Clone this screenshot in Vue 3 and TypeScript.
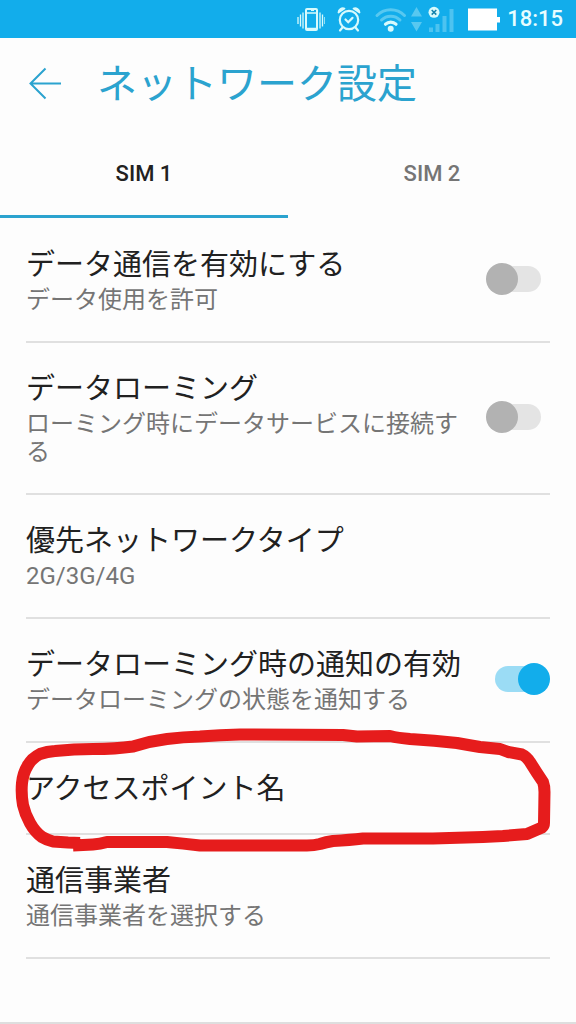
<script setup lang="ts">
import { ref } from 'vue'

interface Setting {
  id: string
  title: string
  summary?: string
  toggle?: boolean
  on?: boolean
  marked?: boolean
}

const sims = ['SIM 1', 'SIM 2']
const activeSim = ref(0)

const settings = ref<Setting[]>([
  { id: 'data', title: 'データ通信を有効にする', summary: 'データ使用を許可', toggle: true, on: false },
  { id: 'roaming', title: 'データローミング', summary: 'ローミング時にデータサービスに接続する', toggle: true, on: false },
  { id: 'network-type', title: '優先ネットワークタイプ', summary: '2G/3G/4G' },
  { id: 'notify', title: 'データローミング時の通知の有効', summary: 'データローミングの状態を通知する', toggle: true, on: true },
  { id: 'apn', title: 'アクセスポイント名', marked: true },
  { id: 'carrier', title: '通信事業者', summary: '通信事業者を選択する' },
])
</script>

<template>
  <div class="screen">
    <div class="status">
      <svg class="vibrate" viewBox="298 0 28 38" fill="none" stroke="currentColor" aria-hidden="true">
        <rect x="307" y="9" width="11" height="21" rx="1" stroke-width="2" />
        <path d="M308 13h9M308 28.500h9" stroke-width="1.500" />
        <path d="M312 10.500h3" stroke-width="1" />
        <path d="M299 17v7M301.500 14.500v12M304 12.500v16M321 12.500v16M323.500 14.500v12M326 17v7" stroke-width="1.300" />
      </svg>
      <svg class="alarm" viewBox="338 0 24 38" fill="none" stroke="currentColor" stroke-width="2.200" stroke-linecap="round" aria-hidden="true">
        <circle cx="350" cy="20" r="9.200" />
        <path d="M346.500 19.500l2.700 2.700 4.300-4.300" />
        <path d="M343.500 27.500l-2.500 3M356.500 27.500l2.500 3" />
        <path d="M339.500 12.500a4.500 4.500 0 0 1 6-4zM360.500 12.500a4.500 4.500 0 0 0-6-4z" fill="currentColor" stroke-width="1.800" stroke-linejoin="round" />
      </svg>
      <div class="network">
        <svg class="wifi" viewBox="375 0 34 38" fill="none" stroke="currentColor" stroke-linecap="round" aria-hidden="true">
          <g opacity="0.350" stroke-width="3">
            <path d="M379 15.500a19.500 19.500 0 0 1 27.500 0" />
            <path d="M383.500 20a13 13 0 0 1 18.500 0" />
          </g>
          <path d="M387.500 24.200a7.500 7.500 0 0 1 10.500 0" stroke-width="3.200" />
          <circle cx="392.700" cy="28.800" r="3" fill="currentColor" stroke="none" />
        </svg>
        <svg class="traffic" viewBox="412 0 12 38" fill="currentColor" opacity="0.350" aria-hidden="true">
          <path d="M412 16.500l5.500-9.500 5.500 9.500zM412 22h11l-5.500 9.500z" />
        </svg>
        <svg class="signal" viewBox="428 0 28 38" fill="currentColor" aria-hidden="true">
          <path d="M430 27.500h4v4.500h-4zM436.500 24h4v8h-4zM443.500 16h4v16h-4zM450.500 9h4v23h-4z" opacity="0.300" />
          <circle cx="435" cy="12.300" r="5.500" />
          <path d="M432.700 10l4.600 4.600M437.300 10l-4.600 4.600" stroke="#1482ac" stroke-width="1.500" />
        </svg>
      </div>
      <div class="power">
        <svg class="battery" viewBox="467 0 34 38" aria-hidden="true">
          <path d="M468 8.500h29v8.500h3v5.500h-3v8h-29z" fill="#fff" />
        </svg>
        <time>18:15</time>
      </div>
    </div>

    <header class="header">
      <button class="back" type="button" aria-label="戻る">
        <svg viewBox="0 0 32 32" fill="none" stroke="currentColor" stroke-width="2" aria-hidden="true">
          <path d="M32 14.500H1.500M16.500 -0.500l-15 15 15 15" />
        </svg>
      </button>
      <h1>ネットワーク設定</h1>
    </header>

    <div class="tabs" role="tablist">
      <button
        v-for="(sim, i) in sims"
        :key="sim"
        type="button"
        role="tab"
        class="tab"
        :class="{ active: activeSim === i }"
        :aria-selected="activeSim === i"
        @click="activeSim = i"
      >
        {{ sim }}
      </button>
    </div>

    <ul class="list">
      <li v-for="s in settings" :key="s.id" class="row">
        <component :is="s.toggle ? 'label' : 'button'" class="item" :class="{ single: !s.summary }" :for="s.toggle ? s.id : undefined" :type="s.toggle ? undefined : 'button'">
          <span class="text">
            <span class="title">{{ s.title }}</span>
            <span v-if="s.summary" class="summary">{{ s.summary }}</span>
          </span>
          <input v-if="s.toggle" :id="s.id" v-model="s.on" class="switch" type="checkbox" role="switch" />
        </component>
        <svg v-if="s.marked" class="mark" viewBox="0 0 576 132" preserveAspectRatio="none" aria-hidden="true">
          <path
            d="M80 121L68 120.500L53 119.500Q47 118 42 115Q35 110 30 101Q25 92 23 83Q21 72 22 61Q23 51 28 43Q32 36 40 32Q47 29.500 55 29Q74 27 93 27Q116 27 133 24.500Q150 19 167 17Q183 15 200 14.500Q220 13 240 12.500L300 12.800L343 13L357 14.500L390 14Q398 16 410 17Q435 18.500 457 21Q468 23 480 25L500 27L508 30L522 32.500Q527 35 530 40L537 51L543 60Q544.500 64 544.500 70L544 101Q544 104 542 105.500L527 112L503 114L483 115L433 116.500L363 116.500Q350 118 333 119Q326 120 320 122Q314 123.500 307 123.500L200 123.500Q183 121.500 167 120L107 120Q100 122 93 122.500L73 123.500"
          />
        </svg>
      </li>
    </ul>
  </div>
</template>

<style>
body {
  margin: 0;
  background: #fdfdfd;
}
</style>

<style scoped>
.screen {
  box-sizing: border-box;
  min-height: 100vh;
  background: #fdfdfd;
  border-bottom: 2px solid #dedede;
  color: #212121;
  font-family: Roboto, "Noto Sans CJK JP", sans-serif;
}

button {
  margin: 0;
  padding: 0;
  border: 0;
  background: none;
  color: inherit;
  font: inherit;
  cursor: pointer;
}

.status {
  display: flex;
  align-items: center;
  justify-content: flex-end;
  gap: 12px;
  height: 38px;
  padding-right: 13px;
  background: #12adeb;
  color: #d8fafc;
}

.status svg {
  display: block;
  height: 38px;
}

.network {
  display: flex;
  gap: 4px;
}

.power {
  display: flex;
  align-items: center;
  gap: 6px;
}

.vibrate,
.signal {
  width: 28px;
}

.alarm {
  width: 24px;
}

.wifi,
.battery {
  width: 34px;
}

.traffic {
  width: 12px;
}

time {
  color: #e8fdff;
  font-size: 22px;
  font-weight: 500;
  line-height: 40px;
}

.header {
  display: flex;
  align-items: center;
  gap: 36px;
  height: 94px;
  padding: 0 29px;
  color: #2ba3cf;
}

.back svg {
  display: block;
  width: 32px;
  height: 32px;
  overflow: visible;
}

h1 {
  margin: 0;
  font-size: 40px;
  font-weight: 400;
  line-height: 60px;
}

.tabs {
  display: grid;
  grid-template-columns: 1fr 1fr;
}

.tab {
  height: 86px;
  border-bottom: 3px solid transparent;
  color: #757575;
  font-size: 22px;
  font-weight: 500;
}

.tab.active {
  border-bottom-color: #2ba3cf;
  color: #212121;
}

.list {
  margin: 0;
  padding: 1px 26px 0;
  list-style: none;
}

.row {
  position: relative;
  border-bottom: 2px solid #e0e0e0;
}

.item {
  box-sizing: border-box;
  display: flex;
  align-items: center;
  gap: 24px;
  width: 100%;
  padding: 25px 0 27px;
  text-align: left;
  cursor: pointer;
}

.item.single {
  padding-bottom: 23px;
}

.text {
  flex: 1;
  min-width: 0;
}

.title,
.summary {
  display: block;
}

.title {
  font-size: 29px;
  line-height: 42px;
}

.summary {
  color: #757575;
  font-size: 24px;
  line-height: 28px;
}

.switch {
  appearance: none;
  display: grid;
  align-items: center;
  flex: none;
  width: 64px;
  height: 32px;
  margin: 0;
  cursor: pointer;
}

.switch::before,
.switch::after {
  content: "";
  grid-area: 1 / 1;
}

.switch::before {
  justify-self: center;
  width: 46px;
  height: 26px;
  border-radius: 13px;
  background: #e4e4e4;
}

.switch::after {
  justify-self: start;
  width: 32px;
  height: 32px;
  border-radius: 50%;
  background: #b2b2b2;
}

.switch:checked::before {
  background: #9bdcf5;
}

.switch:checked::after {
  justify-self: end;
  background: #12adeb;
}

.mark {
  position: absolute;
  top: -21px;
  left: -26px;
  width: calc(100% + 52px);
  height: 132px;
  pointer-events: none;
}

.mark path {
  fill: none;
  stroke: #e61c1c;
  stroke-width: 12px;
  stroke-linejoin: round;
}
</style>
